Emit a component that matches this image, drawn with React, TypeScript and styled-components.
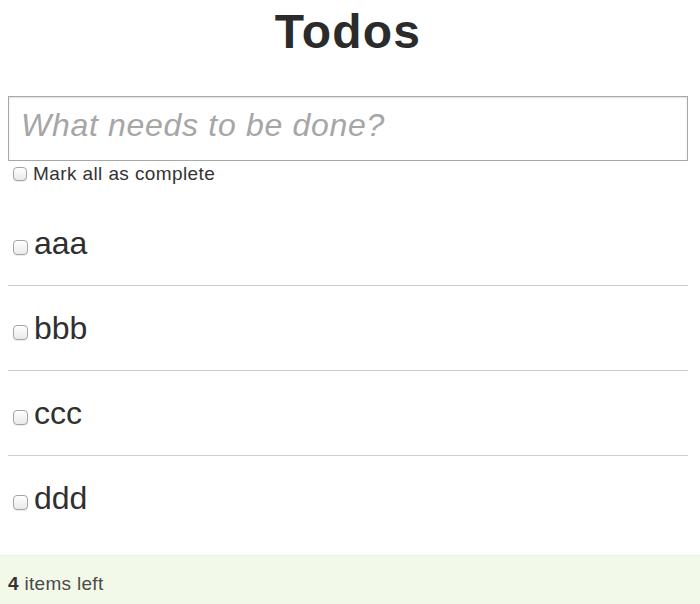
import React from "react";
import styled, { createGlobalStyle } from "styled-components";

const GlobalStyle = createGlobalStyle`
  html, body {
    margin: 0;
    padding: 0;
    background: #ffffff;
  }
  body {
    font-family: "Liberation Sans", Arial, Helvetica, sans-serif;
    color: #333333;
    width: 700px;
    height: 604px;
    overflow: hidden;
  }
`;

const Page = styled.div`
  display: flex;
  flex-direction: column;
  min-height: 604px;
`;

const Container = styled.main`
  display: flex;
  flex-direction: column;
  padding: 0 12px 0 8px;
`;

const Title = styled.h1`
  margin: 0;
  padding-top: 4px;
  font-size: 48px;
  line-height: 56px;
  font-weight: 700;
  letter-spacing: 1.2px;
  text-align: center;
  color: #2b2b2b;
`;

const NewTodo = styled.input`
  box-sizing: border-box;
  margin-top: 36px;
  width: 100%;
  height: 65px;
  padding: 0 12px 6px 12px;
  border: 1px solid #a8a8a8;
  border-radius: 0;
  box-shadow: inset 0 1px 2px rgba(0, 0, 0, 0.12);
  font-family: "Liberation Sans", Arial, Helvetica, sans-serif;
  font-size: 32px;
  letter-spacing: 0.7px;
  color: #333;
  outline: none;
  &::placeholder {
    font-style: italic;
    color: #a6a6a6;
  }
`;

const Check = styled.input.attrs({ type: "checkbox" })<{ $size?: number; $offset?: number }>`
  appearance: none;
  -webkit-appearance: none;
  box-sizing: border-box;
  flex: none;
  width: ${(p) => p.$size ?? 14}px;
  height: ${(p) => p.$size ?? 14}px;
  margin: ${(p) => p.$offset ?? 0}px 6px 0 5px;
  border: 1px solid #a4a4a4;
  border-radius: 4px;
  background: linear-gradient(#ffffff, #e9e9e9);
  box-shadow: 0 1px 1px rgba(0, 0, 0, 0.08);
`;

const MarkAll = styled.label`
  display: flex;
  align-items: center;
  margin-top: 6px;
  height: 14px;
  font-size: 19px;
  line-height: 14px;
  letter-spacing: 0.4px;
  color: #333;
`;

const List = styled.ul`
  list-style: none;
  margin: 20px 0 14px;
  padding: 0;
`;

const Item = styled.li<{ $last?: boolean }>`
  box-sizing: border-box;
  display: flex;
  align-items: center;
  height: 85px;
  border-bottom: 1px solid ${(p) => (p.$last ? "transparent" : "#cfcfcf")};
  font-size: 32px;
  color: #2f2f2f;
`;

const Footer = styled.footer`
  flex: 1;
  background: #f3f9e9;
  padding: 17px 8px 12px;
  font-size: 19px;
  letter-spacing: 0.3px;
  color: #4a4a4a;
  border-top: 1px solid #eef3e4;
`;

const Count = styled.strong`
  font-weight: 700;
  color: #333;
`;

const todos = ["aaa", "bbb", "ccc", "ddd"];

export default function App() {
  return (
    <>
      <GlobalStyle />
      <Page>
        <Container>
          <Title>Todos</Title>
          <NewTodo placeholder="What needs to be done?" />
          <MarkAll>
            <Check />
            Mark all as complete
          </MarkAll>
          <List>
            {todos.map((t, i) => (
              <Item key={t} $last={i === todos.length - 1}>
                <Check $size={15} $offset={8} />
                {t}
              </Item>
            ))}
          </List>
        </Container>
        <Footer>
          <Count>{todos.length}</Count> items left
        </Footer>
      </Page>
    </>
  );
}
